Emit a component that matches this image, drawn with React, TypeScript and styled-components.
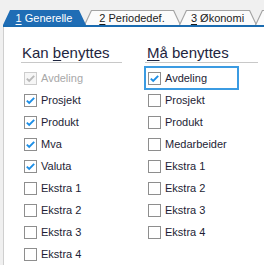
import styled, { createGlobalStyle } from "styled-components";

const GlobalStyle = createGlobalStyle`
  html, body {
    margin: 0;
    padding: 0;
  }
  body {
    background: #f0f0f0;
    font-family: "Liberation Sans", Arial, sans-serif;
    overflow: hidden;
  }
`;

const Window = styled.div`
  width: 264px;
  height: 265px;
  display: flex;
  flex-direction: column;
  overflow: hidden;
`;

const TabStrip = styled.div`
  display: flex;
  align-items: flex-end;
  height: 25px;
  margin-left: 3px;
  border-bottom: 2px solid #1a6bb0;
  overflow: hidden;
  flex-shrink: 0;
`;

const Tab = styled.div<{ $active?: boolean; $w: number }>`
  position: relative;
  flex-shrink: 0;
  width: ${(p) => p.$w}px;
  height: 15px;
  margin-right: -2px;
  display: flex;
  align-items: center;
  justify-content: center;
  font-size: 11px;
  color: ${(p) => (p.$active ? "#ffffff" : "#1b1b1b")};
  z-index: ${(p) => (p.$active ? 2 : 1)};

  &::before {
    content: "";
    position: absolute;
    inset: 0;
    background: ${(p) => (p.$active ? "#1f6db5" : "#a3a3a3")};
    clip-path: polygon(0 100%, 7px 0, calc(100% - 7px) 0, 100% 100%);
  }

  &::after {
    content: "";
    position: absolute;
    inset: 1px 0 0 0;
    display: ${(p) => (p.$active ? "none" : "block")};
    background: #fbfbfb;
    clip-path: polygon(
      1.2px 100%,
      7.8px 0,
      calc(100% - 7.8px) 0,
      calc(100% - 1.2px) 100%
    );
  }

  & > span {
    position: relative;
    z-index: 1;
    margin-left: -1px;
    white-space: nowrap;
  }

  & u {
    text-underline-offset: 2px;
  }
`;

const Panel = styled.div`
  flex: 1;
  margin-left: 3px;
  background: #ffffff;
  border-left: 1px solid #cfcfcf;
  padding: 17px 0 0 17px;
  display: grid;
  grid-template-columns: 101px 113px;
  column-gap: 23px;
  align-content: start;
`;

const Column = styled.div`
  display: flex;
  flex-direction: column;
`;

const Heading = styled.div<{ $indent: number }>`
  font-size: 15px;
  line-height: 18px;
  color: #1e2540;
  padding-left: ${(p) => p.$indent}px;
  border-bottom: 1px solid #c8c8c8;
  white-space: nowrap;

  & u {
    text-underline-offset: 2px;
  }
`;

const List = styled.div`
  display: flex;
  flex-direction: column;
  padding-top: 4px;
`;

const Row = styled.div`
  height: 22px;
  display: flex;
  align-items: center;
  padding-left: 1px;
`;

const Option = styled.label<{ $focused?: boolean; $disabled?: boolean }>`
  display: flex;
  align-items: center;
  gap: 4px;
  width: 91px;
  height: 20px;
  padding-left: 2px;
  box-sizing: border-box;
  font-size: 11px;
  color: ${(p) => (p.$disabled ? "#a8a8a8" : "#1d1d35")};
  outline: ${(p) => (p.$focused ? "2px solid #3b9be2" : "none")};
  white-space: nowrap;
`;

const Box = styled.span<{ $disabled?: boolean }>`
  width: 13px;
  height: 13px;
  box-sizing: border-box;
  flex-shrink: 0;
  display: flex;
  align-items: center;
  justify-content: center;
  background: ${(p) => (p.$disabled ? "#f6f6f6" : "#ffffff")};
  border: 1px solid ${(p) => (p.$disabled ? "#cdcdcd" : "#8e8e8e")};
`;

type Item = {
  label: string;
  checked?: boolean;
  disabled?: boolean;
  focused?: boolean;
};

const canUse: Item[] = [
  { label: "Avdeling", checked: true, disabled: true },
  { label: "Prosjekt", checked: true },
  { label: "Produkt", checked: true },
  { label: "Mva", checked: true },
  { label: "Valuta", checked: true },
  { label: "Ekstra 1" },
  { label: "Ekstra 2" },
  { label: "Ekstra 3" },
  { label: "Ekstra 4" },
];

const mustUse: Item[] = [
  { label: "Avdeling", checked: true, focused: true },
  { label: "Prosjekt" },
  { label: "Produkt" },
  { label: "Medarbeider" },
  { label: "Ekstra 1" },
  { label: "Ekstra 2" },
  { label: "Ekstra 3" },
  { label: "Ekstra 4" },
];

const Check = ({ color }: { color: string }) => (
  <svg width="11" height="11" viewBox="0 0 11 11">
    <path
      d="M1.8 5.6 L4.2 8 L9.2 2.8"
      fill="none"
      stroke={color}
      strokeWidth="1.9"
    />
  </svg>
);

const CheckRow = ({ label, checked, disabled, focused }: Item) => (
  <Row>
    <Option $focused={focused} $disabled={disabled}>
      <Box $disabled={disabled}>
        {checked && <Check color={disabled ? "#b9b9b9" : "#1c8ee6"} />}
      </Box>
      {label}
    </Option>
  </Row>
);

// the fourth tab only shows its left edge in the window
const tabs = [
  { key: "1", rest: " Generelle", w: 83 },
  { key: "2", rest: " Periodedef.", w: 97 },
  { key: "3", rest: " Økonomi", w: 78 },
  { key: "", rest: "", w: 80 },
];

export default function App() {
  return (
    <>
      <GlobalStyle />
      <Window>
        <TabStrip>
          {tabs.map((t, i) => (
            <Tab key={`tab-${i}`} $active={i === 0} $w={t.w}>
              {t.key && (
                <span>
                  <u>{t.key}</u>
                  {t.rest}
                </span>
              )}
            </Tab>
          ))}
        </TabStrip>
        <Panel>
          <Column>
            <Heading $indent={1}>
              Kan <u>b</u>enyttes
            </Heading>
            <List>
              {canUse.map((item) => (
                <CheckRow key={`can-${item.label}`} {...item} />
              ))}
            </List>
          </Column>
          <Column>
            <Heading $indent={2}>
              <u>M</u>å benyttes
            </Heading>
            <List>
              {mustUse.map((item) => (
                <CheckRow key={`must-${item.label}`} {...item} />
              ))}
            </List>
          </Column>
        </Panel>
      </Window>
    </>
  );
}
